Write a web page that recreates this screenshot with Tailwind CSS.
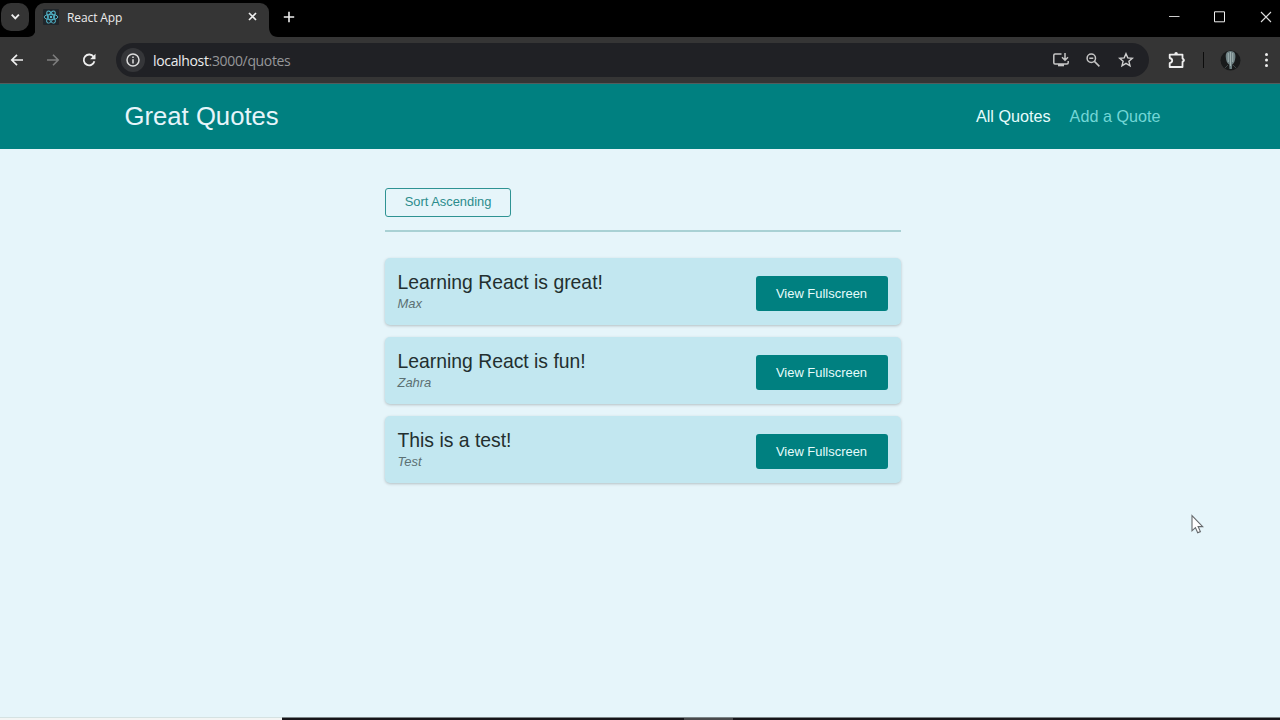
<!DOCTYPE html>
<html lang="en">
<head>
<meta charset="utf-8">
<title>React App</title>
<script src="https://cdn.jsdelivr.net/npm/@tailwindcss/browser@4"></script>
</head>
<body class="relative flex h-[720px] w-[1280px] flex-col overflow-hidden bg-[#e6f5fa] font-['Liberation_Sans',Arial,sans-serif]">
<!-- Tab strip -->
<div class="flex h-[37px] shrink-0 bg-black font-['Open_Sans','Noto_Sans',sans-serif]">
  <div class="mt-[3px] ml-[1px] flex size-7 items-center justify-center rounded-[10px] bg-[#343434]">
    <svg class="size-7" viewBox="0 0 28 28" fill="none" stroke="#eee" stroke-width="1.9"><path d="M10.7 11.7l3.6 3.6 3.6-3.6"/></svg>
  </div>
  <svg class="mt-[27px] -ml-px h-[10px] w-2 shrink-0" viewBox="0 0 8 10" fill="#353535"><path d="M8 0v10H0c5 0 8-4 8-10z"/></svg>
  <div class="mt-[3px] -ml-px flex h-[34px] w-[234px] items-center rounded-t-[9px] bg-[#353535] pl-2">
    <svg class="-mt-[6px] size-4" viewBox="0 0 16 16" fill="none" stroke="#55bdd3" stroke-width=".9"><rect width="16" height="16" rx="1" fill="#20262b" stroke="none"/><ellipse cx="8" cy="8" rx="6.8" ry="2.7"/><ellipse cx="8" cy="8" rx="6.8" ry="2.7" transform="rotate(60 8 8)"/><ellipse cx="8" cy="8" rx="6.8" ry="2.7" transform="rotate(120 8 8)"/><circle cx="8" cy="8" r="1.2" fill="#55bdd3" stroke="none"/></svg>
    <span class="-mt-[5px] ml-2 text-[12px] leading-4 tracking-[-0.1px] text-[#ececec]">React App</span>
    <svg class="-mt-[7px] mr-[11px] ml-auto size-[11px]" viewBox="0 0 11 11" stroke="#eee" stroke-width="1.7"><path d="M2 2l7 7M9 2l-7 7"/></svg>
  </div>
  <svg class="-ml-px mt-[27px] h-[10px] w-[10px] shrink-0" viewBox="0 0 10 10" fill="#353535"><path d="M0 0v10h10C4 10 1 6 1 0z"/></svg>
  <svg class="mt-[11px] ml-[5px] size-3" viewBox="0 0 12 12" stroke="#eee" stroke-width="1.6"><path d="M6 .8v10.4M.8 6h10.4"/></svg>
  <div class="ml-auto flex pt-[11px]">
    <svg class="size-3" viewBox="0 0 12 12" stroke="#ccc"><path d="M0 5.5h10.5"/></svg>
    <svg class="ml-[33px] size-3" viewBox="0 0 12 12" fill="none" stroke="#eee"><path d="M.5 .8h10v10H.5z"/></svg>
    <svg class="mr-[8px] ml-[34px] size-3" viewBox="0 0 12 12" stroke="#ddd" stroke-width="1.1"><path d="M1 1l10 10M11 1L1 11"/></svg>
  </div>
</div>
<!-- Toolbar -->
<div class="flex h-[47px] shrink-0 items-center border-b border-[#535d5d] bg-[#353535] font-['Open_Sans','Noto_Sans',sans-serif]">
  <svg class="ml-[10px] size-[14px]" viewBox="0 0 14 14" fill="none" stroke="#eee" stroke-width="1.7"><path d="M13 7H2M7 1.8L1.8 7 7 12.2"/></svg>
  <svg class="ml-[22px] size-[14px]" viewBox="0 0 14 14" fill="none" stroke="#7d7d7d" stroke-width="1.6"><path d="M1 7h11M7 1.8L12.200 7 7 12.2"/></svg>
  <svg class="ml-[22px] size-[14px]" viewBox="0 0 14 14" fill="none" stroke="#eee" stroke-width="1.8"><path d="M11.600 3.800A5.400 5.400 0 1 0 12.400 8.200"/><path d="M13.500.8v5.400H8.100z" fill="#eee" stroke="none"/></svg>
  <div class="ml-[20px] flex h-[34px] w-[1033px] items-center rounded-full bg-[#202125] pl-[5px]">
    <div class="flex size-[24px] items-center justify-center rounded-full bg-[#353639]">
      <svg class="size-[14px]" viewBox="0 0 14 14" fill="none" stroke="#ddd" stroke-width="1.5"><circle cx="7" cy="7" r="6"/><path d="M7 6.200v4.200M7 3.400v1.600"/></svg>
    </div>
    <span class="mt-[2px] ml-[8px] w-[139px] text-[14px] leading-5 tracking-[-0.34px] whitespace-nowrap text-[#969799]"><span class="text-[#eceded]">localhost</span>:3000/quotes</span>
    <svg class="ml-auto h-4 w-[18px]" viewBox="0 0 18 16" fill="none" stroke="#c5c5c5" stroke-width="1.5"><path d="M9.500 2H3Q1.800 2 1.800 3.200v7.600Q1.800 12 3 12h12q1.200 0 1.200-1.200V9M13 1v7M10 5.300l3 3 3-3"/><path d="M6 12h6v2.300H6z" fill="#c5c5c5" stroke="none"/></svg>
    <svg class="ml-[16px] size-[14px]" viewBox="0 0 14 14" fill="none" stroke="#c5c5c5" stroke-width="1.5"><circle cx="5.300" cy="5.300" r="4.200"/><path d="M8.400 8.400l5 5M3.300 5.300h4"/></svg>
    <svg class="mr-[15px] ml-[18px] size-4" viewBox="0 0 16 16" fill="none" stroke="#d0d0d0" stroke-width="1.4"><path d="M8 1.700l1.800 4.200 4.600.4-3.500 3 1.100 4.500L8 11.400l-4 2.400 1.100-4.500-3.500-3 4.600-.4z"/></svg>
  </div>
  <svg class="ml-[19px] h-[18px] w-[18px]" viewBox="0 0 18 18" fill="none" stroke="#eee" stroke-width="1.8"><path d="M1.700 3.600h12.800v4q1.200.2 1.200 1.600t-1.200 1.600v5.200H1.700v-3.800q2.500-.6 2.500-2.600T1.700 7z" stroke-linejoin="round"/><path d="M6.300 3.200a1.800 2.200 0 0 1 3.600 0zM14.800 7.400a1.900 1.800 0 0 1 0 3.600z" fill="#eee" stroke="none"/></svg>
  <div class="ml-[17px] h-4 w-px bg-[#0c0c0c]"></div>
  <svg class="ml-[16px] size-[21px]" viewBox="0 0 21 21"><circle cx="10.500" cy="10.500" r="10" fill="#181a1b"/><path d="M10.500 1c4 0 5.200 2.800 4.900 6.200-.3 3.800-1.500 6.300-3.200 7.300l-.3 4.500H9.500l-.3-4.500C7.300 13.500 6 11 5.800 7.200 5.500 3.800 6.600 1 10.500 1z" fill="#6e8083"/><path d="M8.300 3v9M10.500 2v14M12.700 3v9" stroke="#a4b6b5" stroke-width=".9"/><path d="M5 18l3-3M16 18l-3-3" stroke="#3d4647"/></svg>
  <svg class="ml-[23px] h-4 w-[5px]" viewBox="0 0 5 16" fill="#eee"><circle cx="2.500" cy="2.500" r="1.500"/><circle cx="2.500" cy="8" r="1.500"/><circle cx="2.500" cy="13.500" r="1.500"/></svg>
</div>
<!-- Site header -->
<header class="flex h-[65px] shrink-0 items-center justify-between bg-[#008080] pr-[119.500px] pb-[2px] pl-[124.500px]">
  <h1 class="text-[25.700px] leading-8 text-[#e6f5fa]">Great Quotes</h1>
  <nav class="flex gap-[19px] text-[16.2px] leading-5 whitespace-nowrap">
    <a class="text-[#e6fcfc]">All Quotes</a>
    <a class="text-[#72d6d6]">Add a Quote</a>
  </nav>
</header>
<!-- Quote list -->
<main class="ml-[385px] w-[516px] pt-[39px]">
  <button class="block h-[29px] w-[126px] rounded-[3px] border border-[#2e9393] pb-px text-[12.9px] leading-4 text-[#2b8c8c]">Sort Ascending</button>
  <div class="mt-[13px] h-[2px] bg-[#a9d1d4]"></div>
  <ul class="mt-[26px] flex flex-col gap-3">
    <li class="flex h-[67px] items-center justify-between rounded-[5px] bg-[#c2e7f0] pr-[13px] pl-[12.500px] shadow-[0_1px_3px_rgba(0,0,0,0.22)]">
      <div><p class="-mt-px pb-px text-[19.350px] leading-6 text-[#232f2f]">Learning React is great!</p><p class="text-[12.950px] leading-[18px] text-[#5c7073] italic">Max</p></div>
      <button class="mt-[4px] h-[35px] w-[132px] rounded-[3px] bg-[#008080] pr-px text-[12.950px] leading-4 text-[#e6fcfc]">View Fullscreen</button>
    </li>
    <li class="flex h-[67px] items-center justify-between rounded-[5px] bg-[#c2e7f0] pr-[13px] pl-[12.500px] shadow-[0_1px_3px_rgba(0,0,0,0.22)]">
      <div><p class="-mt-px pb-px text-[19.350px] leading-6 text-[#232f2f]">Learning React is fun!</p><p class="text-[12.950px] leading-[18px] text-[#5c7073] italic">Zahra</p></div>
      <button class="mt-[4px] h-[35px] w-[132px] rounded-[3px] bg-[#008080] pr-px text-[12.950px] leading-4 text-[#e6fcfc]">View Fullscreen</button>
    </li>
    <li class="flex h-[67px] items-center justify-between rounded-[5px] bg-[#c2e7f0] pr-[13px] pl-[12.500px] shadow-[0_1px_3px_rgba(0,0,0,0.22)]">
      <div><p class="-mt-px pb-px text-[19.350px] leading-6 text-[#232f2f]">This is a test!</p><p class="text-[12.950px] leading-[18px] text-[#5c7073] italic">Test</p></div>
      <button class="mt-[4px] h-[35px] w-[132px] rounded-[3px] bg-[#008080] pr-px text-[12.950px] leading-4 text-[#e6fcfc]">View Fullscreen</button>
    </li>
  </ul>
</main>
<!-- Top edge of the taskbar -->
<div class="mt-auto flex h-[3px] shrink-0">
  <div class="w-[282px] border-t border-[#d5e2e2] bg-[#f3f5f4]"></div>
  <div class="w-[402px] border-t border-[#7c8587] bg-[#171519]"></div>
  <div class="w-[49px] border-t border-[#7c8587] bg-[#4a4a4c]"></div>
  <div class="flex-1 border-t border-[#7c8587] bg-[#171519]"></div>
</div>
<!-- Pointer -->
<svg class="absolute top-[514px] left-[1191px] h-5 w-[14px]" viewBox="0 0 14 20" fill="#fff" stroke="#65696c" stroke-width="1.100"><path d="M1 1.500v15.300l3.400-3.200 2.300 5.200 2.700-1.200-2.300-5h4.600z"/></svg>
</body>
</html>
